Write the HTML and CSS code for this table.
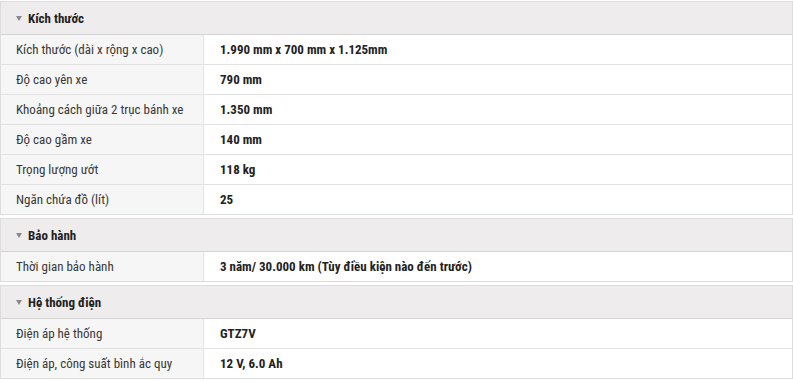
FILE: index.html
```html
<!DOCTYPE html>
<html lang="vi">
<head>
<meta charset="utf-8">
<title>Thông số kỹ thuật</title>
<link rel="stylesheet" href="styles.css">
</head>
<body>
<div class="specs">
  <section class="group">
    <div class="head"><span class="caret"></span><span class="title">Kích thước</span></div>
    <div class="row"><div class="label">Kích thước (dài x rộng x cao)</div><div class="value">1.990 mm x 700 mm x 1.125mm</div></div>
    <div class="row"><div class="label">Độ cao yên xe</div><div class="value">790 mm</div></div>
    <div class="row"><div class="label">Khoảng cách giữa 2 trục bánh xe</div><div class="value">1.350 mm</div></div>
    <div class="row"><div class="label">Độ cao gầm xe</div><div class="value">140 mm</div></div>
    <div class="row"><div class="label">Trọng lượng ướt</div><div class="value">118 kg</div></div>
    <div class="row"><div class="label">Ngăn chứa đồ (lít)</div><div class="value">25</div></div>
  </section>
  <section class="group">
    <div class="head"><span class="caret"></span><span class="title">Bảo hành</span></div>
    <div class="row"><div class="label">Thời gian bảo hành</div><div class="value">3 năm/ 30.000 km (Tùy điều kiện nào đến trước)</div></div>
  </section>
  <section class="group">
    <div class="head"><span class="caret"></span><span class="title">Hệ thống điện</span></div>
    <div class="row"><div class="label">Điện áp hệ thống</div><div class="value">GTZ7V</div></div>
    <div class="row"><div class="label">Điện áp, công suất bình ắc quy</div><div class="value">12 V, 6.0 Ah</div></div>
  </section>
</div>
</body>
</html>
```
FILE: styles.css
```css
html, body {
  margin: 0;
  padding: 0;
  background: #ffffff;
}
body {
  font-family: Roboto, "Liberation Sans", Arial, sans-serif;
  font-size: 13px;
  font-stretch: 85%;
  color: #383838;
}
.specs {
  padding-top: 1px;
  width: 793px;
}
.group {
  border: 1px solid #dddddd;
  margin-bottom: 3px;
}
.head {
  height: 32px;
  background: #eeecec;
  border-bottom: 1px solid #d4d4d4;
  display: flex;
  align-items: center;
  padding-left: 15px;
  gap: 6px;
}
.caret {
  width: 0;
  height: 0;
  border-left: 3.5px solid transparent;
  border-right: 3.5px solid transparent;
  border-top: 5px solid #8a8a8a;
}
.title {
  font-weight: 700;
  font-size: 13px;
  color: #222222;
}
.row {
  display: grid;
  grid-template-columns: 203px 1fr;
  height: 29px;
  border-bottom: 1px solid #e2e2e2;
}
.row:last-child {
  border-bottom: none;
}
.label {
  background: #f6f6f6;
  border-right: 1px solid #e4e4e4;
  padding-left: 15px;
  display: flex;
  align-items: center;
  white-space: nowrap;
}
.value {
  padding-left: 16px;
  display: flex;
  align-items: center;
  font-weight: 700;
  color: #222222;
  white-space: nowrap;
}
```
